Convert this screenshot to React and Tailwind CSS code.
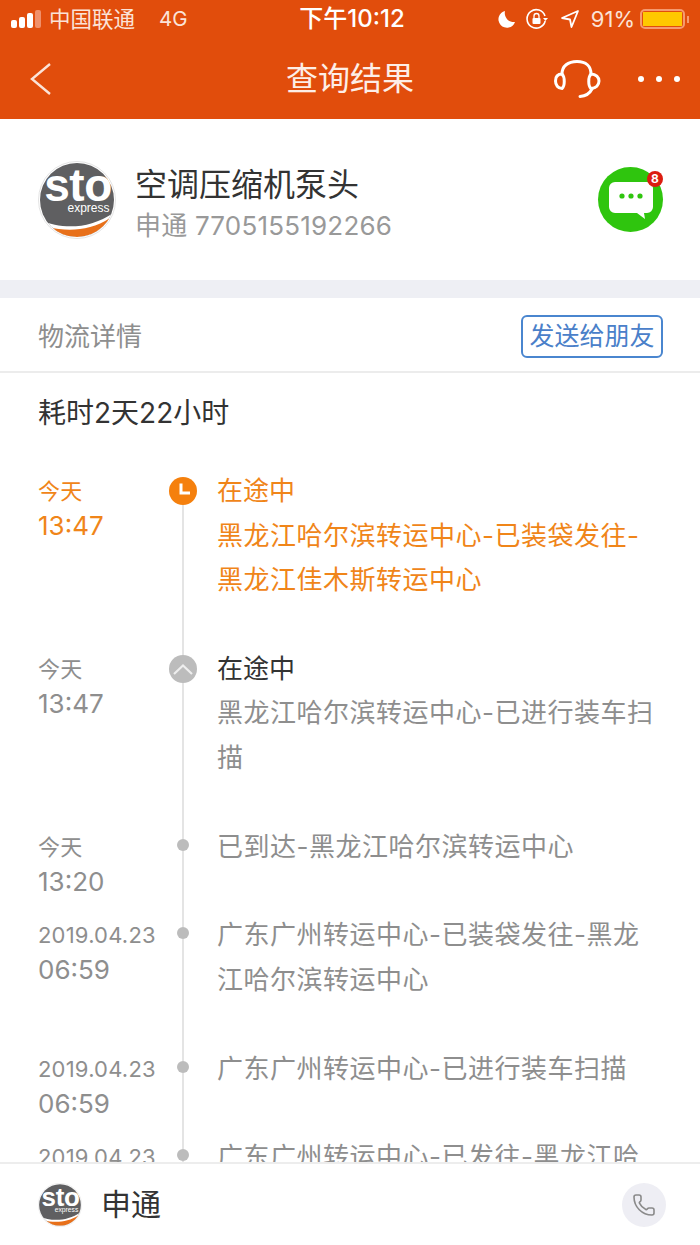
import { Phone } from "lucide-react";

const cjk = { fontFamily: '"Inter", "Noto Sans CJK SC", sans-serif' };

const rows = [
  { day: "今天", time: "13:47", lines: ["黑龙江哈尔滨转运中心-已装袋发往-", "黑龙江佳木斯转运中心"], title: "在途中", active: true, pad: "pb-[44px]" },
  { day: "今天", time: "13:47", lines: ["黑龙江哈尔滨转运中心-已进行装车扫", "描"], title: "在途中", up: true, pad: "pb-[45px]" },
  { day: "今天", time: "13:20", lines: ["已到达-黑龙江哈尔滨转运中心"], pad: "pb-0" },
  { day: "2019.04.23", time: "06:59", lines: ["广东广州转运中心-已装袋发往-黑龙", "江哈尔滨转运中心"], pad: "pb-[45px]" },
  { day: "2019.04.23", time: "06:59", lines: ["广东广州转运中心-已进行装车扫描"], pad: "pb-0" },
  { day: "2019.04.23", time: "06:59", lines: ["广东广州转运中心-已发往-黑龙江哈", "尔滨转运中心"], pad: "pb-[45px]" },
];

function StoLogo({ size, small }) {
  const id = small ? "stoS" : "stoL";
  return (
    <svg width={size} height={size} viewBox="0 0 78 78" className="shrink-0">
      <defs>
        <clipPath id={id}>
          <circle cx="39" cy="39" r="37" />
        </clipPath>
      </defs>
      <circle cx="39" cy="39" r="38.5" fill="#fff" stroke="#e4e4e4" />
      <g clipPath={`url(#${id})`}>
        <rect width="78" height="78" fill="#5f5f61" />
        <path d="M0 58 C22 68 50 70 78 50 L78 78 L0 78 Z" fill="#fff" />
        <path d="M10 66 C30 71 52 70 72 57 C66 68 52 76 39 76 C27 76 17 73 10 66 Z" fill="#e8701a" />
      </g>
      <text x="40" y="40" textAnchor="middle" fontFamily="Liberation Sans, sans-serif" fontWeight="700" fontSize="46" letterSpacing="-0.5" fill="#fff">sto</text>
      <text x="50.5" y="51" textAnchor="middle" fontFamily="Liberation Sans, sans-serif" fontSize="12" fill="#fff">express</text>
    </svg>
  );
}

function Headset() {
  return (
    <svg width="48" height="38" viewBox="0 0 48 38" fill="none" stroke="#fff" strokeWidth="3" strokeLinecap="round" strokeLinejoin="round">
      <path d="M9 14 C9 6 15 1.5 24 1.5 C33 1.5 38 6 38 14" />
      <path d="M9 14 C4 14 2.5 17.5 2.5 21 C2.5 25 5 28.5 9 28.5 C12 26 12 17 9 14 Z" />
      <path d="M38 14 C43 14 46 17.5 46 21 C46 25 43 28.5 38 28.5 C35 26 35 17 38 14 Z" />
      <path d="M39 29 C37 33 33 36 27 36.5" />
    </svg>
  );
}

function StatusBar() {
  return (
    <div className="h-[38px] grid grid-cols-[1fr_auto_1fr] items-center pl-[11px] pr-[11px] text-[#fbe3d8] text-[21.5px]" style={cjk}>
      <div className="flex items-center">
        <div className="flex items-end gap-[2px] h-[18px] mr-[8px]">
          <div className="w-[6px] h-[8px] rounded-[2px] bg-white" />
          <div className="w-[6px] h-[11px] rounded-[2px] bg-white" />
          <div className="w-[6px] h-[15px] rounded-[2px] bg-white" />
          <div className="w-[6px] h-[18px] rounded-[2px] bg-[#f0906a]" />
        </div>
        <span>中国联通</span>
        <span className="ml-[24px] text-[20.5px]">4G</span>
      </div>
      <div className="text-[24px] text-white font-medium ml-[4px]">下午10:12</div>
      <div className="flex items-center justify-end">
        <svg width="20" height="20" viewBox="0 0 20 20" className="mr-[8px]">
          <path d="M8 2 A8.5 8.5 0 1 0 18 13 A9 9 0 0 1 8 2 Z" fill="#fff" />
        </svg>
        <svg width="24" height="22" viewBox="0 0 24 22" fill="none" stroke="#fff" strokeWidth="1.6" className="mr-[11px]">
          <path d="M20 8 A9.2 9.2 0 1 0 20.2 13" />
          <path d="M18 10 L23 10 L20.5 13 Z" fill="#fff" stroke="none" />
          <rect x="7.5" y="10" width="8" height="6" fill="#fff" stroke="none" rx="1" />
          <path d="M9 10 V8 A2.5 2.5 0 0 1 14 8 V10" strokeWidth="1.3" />
        </svg>
        <svg width="20" height="20" viewBox="0 0 20 20" fill="none" stroke="#fff" strokeWidth="1.8" strokeLinejoin="round" className="mr-[11px]">
          <path d="M18 2 L2 9 L10 10.5 L11.5 18 Z" />
        </svg>
        <span className="text-[22px] text-[#fbe3d8] mr-[5px]">91%</span>
        <div className="w-[45px] h-[20px] rounded-[5px] border-2 border-[#f59a70] p-[1px]">
          <div className="h-full w-full bg-[#ffc800]" />
        </div>
        <div className="w-[2px] h-[7px] bg-[#f59a70] ml-[2px]" />
      </div>
    </div>
  );
}

function Dot({ row }) {
  if (row.active) {
    return (
      <div className="w-[28px] h-[28px] rounded-full bg-[#f5800d] relative shrink-0">
        <svg width="28" height="28" viewBox="0 0 28 28" fill="none" stroke="#fff" strokeWidth="3">
          <path d="M12 6.5 V16 H21" />
        </svg>
      </div>
    );
  }
  if (row.up) {
    return (
      <div className="w-[28px] h-[28px] rounded-full bg-[#bcbcbc] flex items-center justify-center shrink-0">
        <svg width="20" height="12" viewBox="0 0 20 12" fill="none" stroke="#eeeeee" strokeWidth="2.2">
          <path d="M1 11 L10 2.5 L19 11" />
        </svg>
      </div>
    );
  }
  return <div className="w-[12px] h-[12px] rounded-full bg-[#bcbcbc] shrink-0" />;
}

export default function App() {
  return (
    <div className="w-[700px] h-[1245px] flex flex-col bg-white overflow-hidden" style={cjk}>
      <div className="bg-[#e14d0c] h-[119px] shrink-0">
        <StatusBar />
        <div className="h-[81px] grid grid-cols-[1fr_auto_1fr] items-center px-[20px]">
          <svg width="26" height="34" viewBox="0 0 26 34" fill="none" stroke="#fbe3d8" strokeWidth="2.4" className="ml-[8px]">
            <path d="M22 2 L4 17 L22 32" />
          </svg>
          <div className="text-[32px] text-[#fdeee7]">查询结果</div>
          <div className="flex items-center justify-end gap-[37px]">
            <Headset />
            <div className="flex gap-[12px]">
              <div className="w-[6px] h-[6px] rounded-full bg-white" />
              <div className="w-[6px] h-[6px] rounded-full bg-white" />
              <div className="w-[6px] h-[6px] rounded-full bg-white" />
            </div>
          </div>
        </div>
      </div>

      <div className="h-[161px] shrink-0 flex items-center pl-[38px] pr-[37px]">
        <StoLogo size={78} />
        <div className="ml-[19px] flex-1 pt-[7px]">
          <div className="text-[32px] leading-[44px] text-[#333]">空调压缩机泵头</div>
          <div className="text-[26px] leading-[36px] mt-[1px] tracking-[0.2px] text-[#999]">申通 7705155192266</div>
        </div>
        <div className="w-[65px] h-[65px] rounded-full bg-[#2fc50e] relative flex items-center justify-center">
          <svg width="46" height="38" viewBox="0 0 46 38" className="mt-[1px]">
            <path d="M7 1 H39 A6 6 0 0 1 45 7 V26 A6 6 0 0 1 39 32 H36 L37 38 L29 32 H7 A6 6 0 0 1 1 26 V7 A6 6 0 0 1 7 1 Z" fill="#fff" />
            <circle cx="14" cy="15" r="2.6" fill="#2fc50e" />
            <circle cx="23" cy="15" r="2.6" fill="#2fc50e" />
            <circle cx="32" cy="15" r="2.6" fill="#2fc50e" />
          </svg>
          <div className="absolute right-[0px] top-[4px] w-[16px] h-[16px] rounded-full bg-[#dc1d10] text-white text-[12px] font-bold flex items-center justify-center">8</div>
        </div>
      </div>

      <div className="h-[18px] bg-[#eeeff4] shrink-0" />

      <div className="h-[75px] shrink-0 flex items-center justify-between pl-[38px] pr-[37px] pt-[4px] border-b-2 border-[#ececec]">
        <div className="text-[26px] text-[#8e8e8e]">物流详情</div>
        <div className="w-[142px] h-[43px] rounded-[6px] border-2 border-[#4a86cf] text-[#4a80c9] text-[25px] flex items-center justify-center">发送给朋友</div>
      </div>

      <div className="flex-1 min-h-0 overflow-hidden">
        <div className="pl-[38px] h-[96px] pt-[20px] text-[28px] leading-[40px] text-[#333]">耗时2天22小时</div>
        {rows.map((row, i) => (
          <div key={i} className="flex pl-[38px] min-h-[88px]">
            <div className={`w-[130px] shrink-0 ${row.active ? "text-[#f08519]" : "text-[#8e8e8e]"}`}>
              <div className="text-[22px] leading-[44px] h-[45px] tracking-[0.2px]">{row.day}</div>
              <div className="text-[26px] leading-[24px]">{row.time}</div>
            </div>
            <div className="w-[30px] shrink-0 flex flex-col items-center">
              <div className={`w-[2px] ${i === 0 ? "h-0 mt-[8px]" : row.up ? "h-[8px] bg-[#e4e4e4]" : "h-[14px] bg-[#e4e4e4]"}`} />
              <Dot row={row} />
              <div className="w-[2px] flex-1 bg-[#e4e4e4]" />
            </div>
            <div className={`ml-[19px] text-[26px] leading-[44.5px] whitespace-nowrap ${row.pad} ${row.active ? "text-[#f08519]" : "text-[#8e8e8e]"}`}>
              {row.title && <div className={row.active ? "" : "text-[#333]"}>{row.title}</div>}
              {row.lines.map((l) => (
                <div key={l} className="tracking-[0.5px]">{l}</div>
              ))}
            </div>
          </div>
        ))}
      </div>

      <div className="h-[83px] shrink-0 flex items-center pl-[38px] pr-[34px] border-t-2 border-[#ededed] bg-white">
        <StoLogo size={44} small />
        <div className="ml-[19px] flex-1 text-[30px] text-[#333]">申通</div>
        <div className="w-[44px] h-[44px] rounded-full bg-[#eeeef4] flex items-center justify-center">
          <Phone size={24} strokeWidth={1.6} color="#8a8a8a" />
        </div>
      </div>
    </div>
  );
}
